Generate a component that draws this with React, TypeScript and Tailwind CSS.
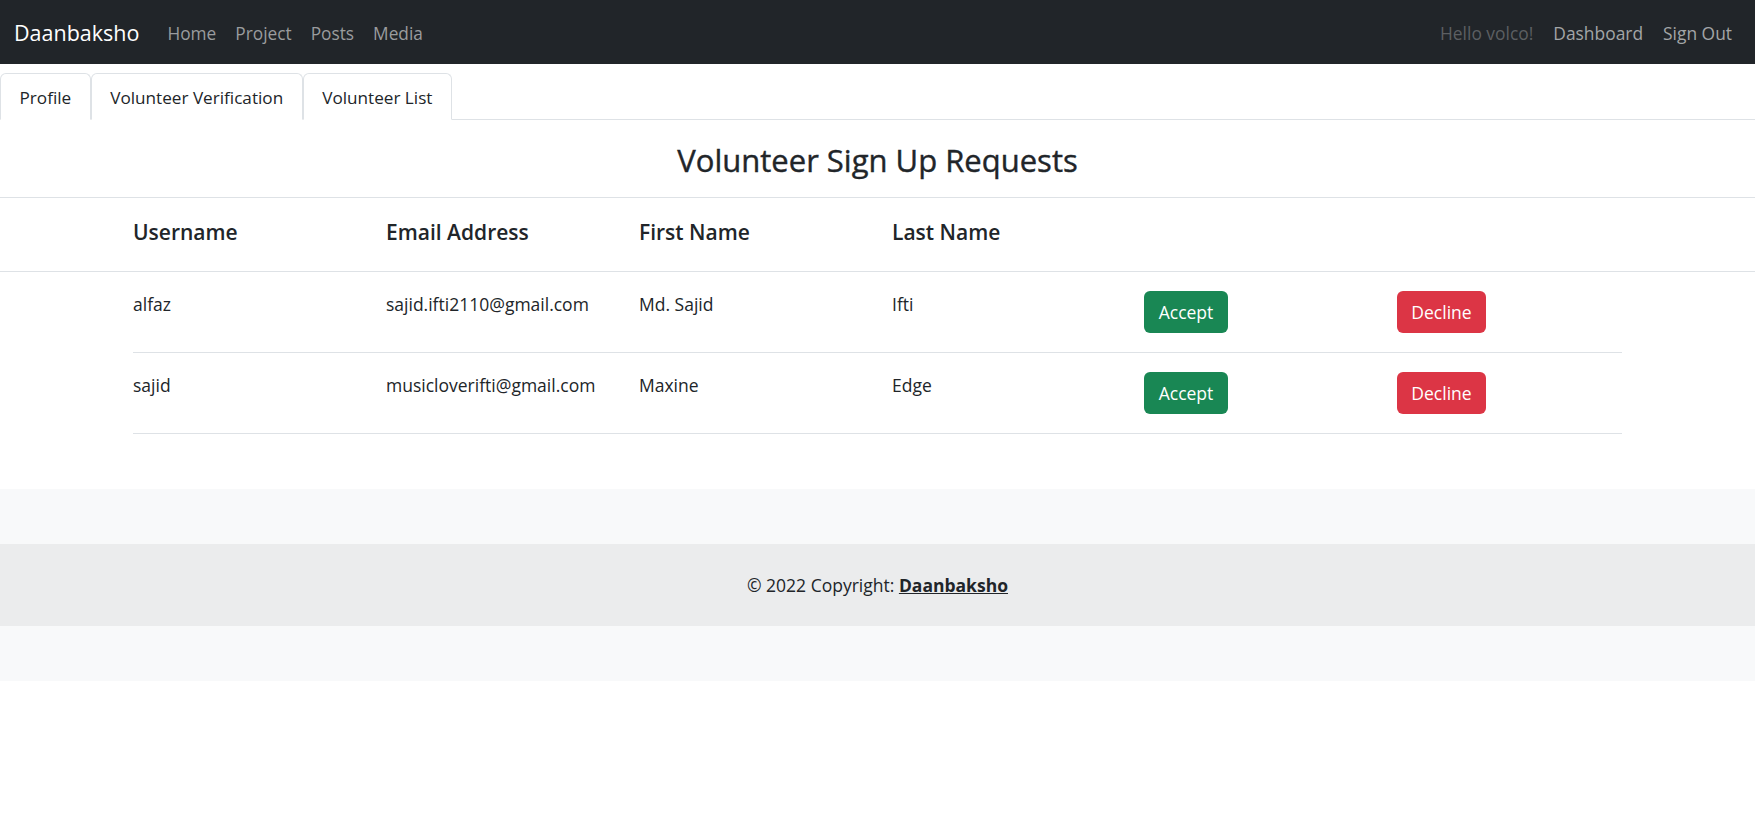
import { useState } from 'react';

const REQUESTS = [
  { username: 'alfaz', email: 'sajid.ifti2110@gmail.com', first: 'Md. Sajid', last: 'Ifti' },
  { username: 'sajid', email: 'musicloverifti@gmail.com', first: 'Maxine', last: 'Edge' },
];

const TABS = ['Profile', 'Volunteer Verification', 'Volunteer List'];

const font = { fontFamily: '"Open Sans", "Noto Sans", sans-serif' };

export default function App() {
  const [tab, setTab] = useState('Volunteer Verification');

  return (
    <div className="min-h-[813px] bg-white text-[#212529]" style={font}>
      {/* Navbar */}
      <nav className="flex h-16 items-center justify-between bg-[#212529] pl-[14px] pr-[23px] pt-[3px]">
        <div className="flex items-center">
          <a className="mr-[28px] text-[21.5px] text-white">Daanbaksho</a>
          <div className="flex items-center gap-[19px] text-[17.3px] text-[#9a9c9e]">
            <a>Home</a>
            <a>Project</a>
            <a>Posts</a>
            <a>Media</a>
          </div>
        </div>
        <div className="flex items-center gap-[20px] text-[17.4px]">
          <span className="text-[#5c5f62]">Hello volco!</span>
          <a className="text-[#a3a5a7]">Dashboard</a>
          <a className="text-[#a3a5a7]">Sign Out</a>
        </div>
      </nav>

      {/* Tabs */}
      <div className="flex h-[56px] items-end border-b border-[#dee2e6]">
        {TABS.map((t) => (
          <button
            key={t}
            onClick={() => setTab(t)}
            className={`-mb-px h-[47px] rounded-t-[6px] border border-[#dee2e6] border-b-white bg-white px-[18.5px] pt-[2px] text-[17.15px] ${
              tab === t ? 'text-[#212529]' : 'text-[#212529]'
            }`}
          >
            {t}
          </button>
        ))}
      </div>

      {/* Title */}
      <div className="flex h-[78px] items-center justify-center border-b border-[#dee2e6] pt-[3px]">
        <h2 className="text-[31px] font-medium leading-tight [-webkit-text-stroke:0.4px_#212529]">
          Volunteer Sign Up Requests
        </h2>
      </div>

      {/* Table header */}
      <div className="border-b border-[#dee2e6] pl-[133px]">
        <div className="grid h-[73px] grid-cols-[253px_253px_253px_253px] items-center pb-[4px] text-[21px] font-semibold">
          <div>Username</div>
          <div>Email Address</div>
          <div>First Name</div>
          <div>Last Name</div>
        </div>
      </div>

      {/* Rows */}
      <div className="ml-[133px] w-[1489px]">
        {REQUESTS.map((r) => (
          <div
            key={r.username}
            className="grid h-[81px] grid-cols-[253px_253px_253px_252px_253px_1fr] items-start border-b border-[#dee2e6] pt-[19px] text-[17.5px]"
          >
            <div className="leading-[27px]">{r.username}</div>
            <div className="leading-[27px]">{r.email}</div>
            <div className="leading-[27px]">{r.first}</div>
            <div className="leading-[27px]">{r.last}</div>
            <div>
              <button className="h-[42px] w-[84px] rounded-[6px] bg-[#198754] text-[17.5px] text-white">
                Accept
              </button>
            </div>
            <div>
              <button className="h-[42px] w-[89px] rounded-[6px] bg-[#dc3545] text-[17.5px] text-white">
                Decline
              </button>
            </div>
          </div>
        ))}
      </div>

      {/* Footer */}
      <footer className="mt-[55px] bg-[#f8f9fa] py-[55px]">
        <div className="flex h-[82px] items-center justify-center bg-[#ebeced] text-[17.5px] text-[#212529]">
          <span>
            © 2022 Copyright:{' '}
            <a className="font-bold text-[#212529] underline">Daanbaksho</a>
          </span>
        </div>
      </footer>
    </div>
  );
}
